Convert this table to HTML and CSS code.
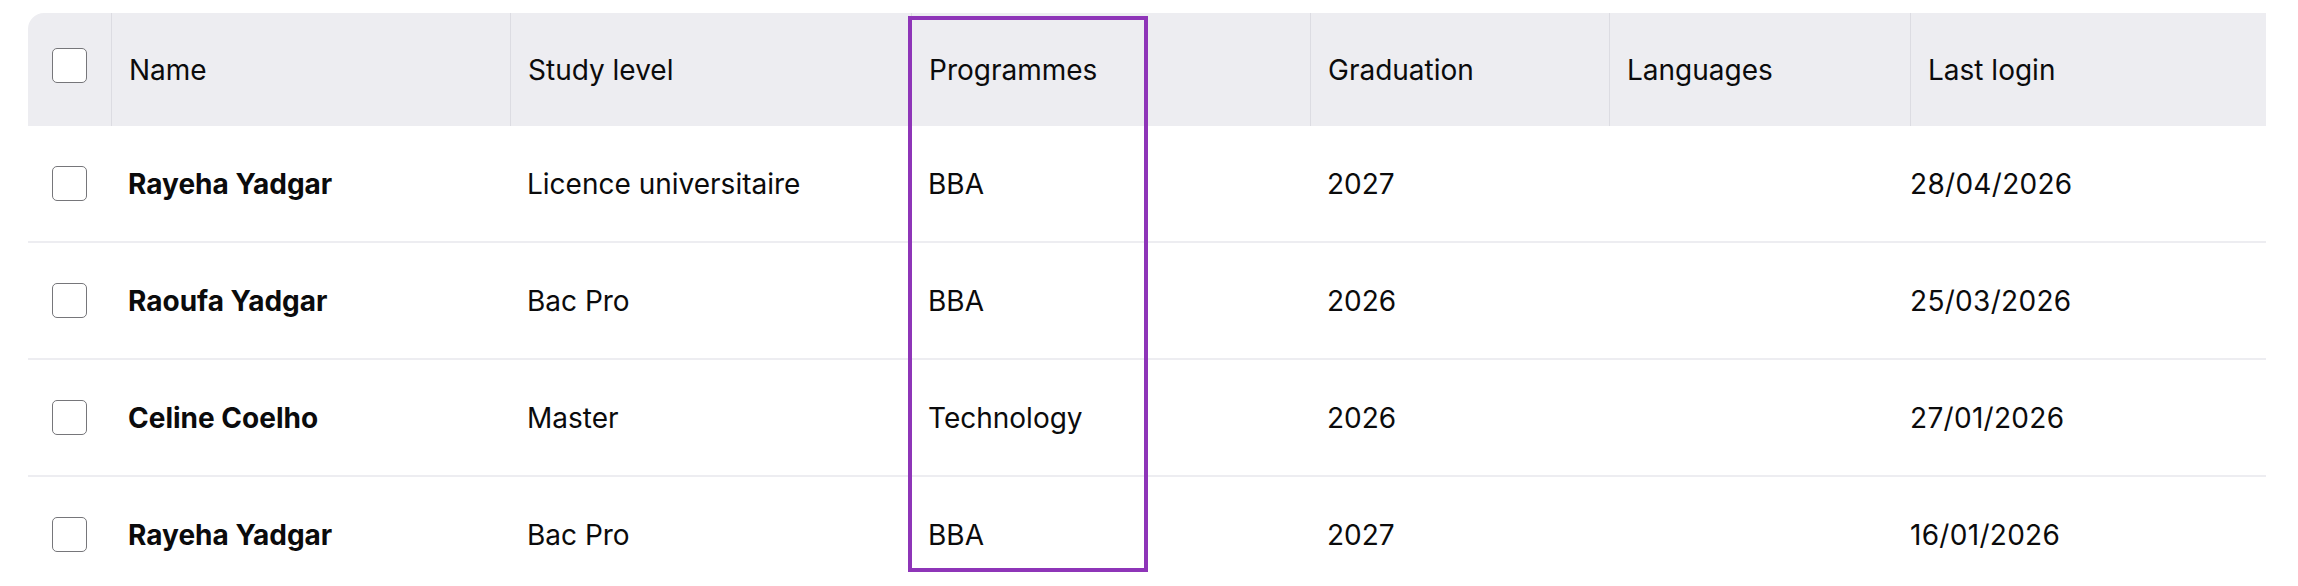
FILE: index.html
```html
<!DOCTYPE html>
<html lang="en">
<head>
<meta charset="utf-8">
<title>Students</title>
<link rel="stylesheet" href="styles.css">
</head>
<body>
<div class="table">
  <div class="row head">
    <div class="cell check"><span class="box"></span></div>
    <div class="cell">Name</div>
    <div class="cell">Study level</div>
    <div class="cell">Programmes</div>
    <div class="cell">Graduation</div>
    <div class="cell">Languages</div>
    <div class="cell">Last login</div>
  </div>
  <div class="row">
    <div class="cell check"><span class="box"></span></div>
    <div class="cell name">Rayeha Yadgar</div>
    <div class="cell">Licence universitaire</div>
    <div class="cell">BBA</div>
    <div class="cell">2027</div>
    <div class="cell"></div>
    <div class="cell last">28/04/2026</div>
  </div>
  <div class="row">
    <div class="cell check"><span class="box"></span></div>
    <div class="cell name">Raoufa Yadgar</div>
    <div class="cell">Bac Pro</div>
    <div class="cell">BBA</div>
    <div class="cell">2026</div>
    <div class="cell"></div>
    <div class="cell last">25/03/2026</div>
  </div>
  <div class="row">
    <div class="cell check"><span class="box"></span></div>
    <div class="cell name">Celine Coelho</div>
    <div class="cell">Master</div>
    <div class="cell">Technology</div>
    <div class="cell">2026</div>
    <div class="cell"></div>
    <div class="cell last">27/01/2026</div>
  </div>
  <div class="row">
    <div class="cell check"><span class="box"></span></div>
    <div class="cell name">Rayeha Yadgar</div>
    <div class="cell">Bac Pro</div>
    <div class="cell">BBA</div>
    <div class="cell">2027</div>
    <div class="cell"></div>
    <div class="cell last">16/01/2026</div>
  </div>
  <div class="highlight"></div>
</div>
</body>
</html>
```
FILE: styles.css
```css
html, body {
  margin: 0;
  padding: 0;
  background: #ffffff;
  overflow: hidden;
}

body {
  font-family: "Inter", "Noto Sans", sans-serif;
  font-size: 28px;
  color: #0b0b0c;
}

.table {
  position: relative;
  margin: 13px 0 0 28px;
  width: 2238px;
}

.row {
  display: grid;
  grid-template-columns: 83px 399px 401px 399px 299px 301px 1fr;
  height: 115px;
  border-bottom: 2px solid #ededf1;
  align-items: center;
}

.row.head {
  height: 113px;
  background: #ededf1;
  border-radius: 16px 0 0 0;
  border-bottom: none;
  align-items: stretch;
}

.cell {
  display: flex;
  align-items: center;
  padding-left: 17px;
  white-space: nowrap;
}

.head .cell + .cell {
  border-left: 1.5px solid #dcdce2;
}

.cell.check {
  padding-left: 24px;
}

.head .cell.check {
  padding-bottom: 9px;
}

.cell.name {
  font-weight: 700;
}

.cell.last {
  padding-left: 0;
  letter-spacing: 0.3px;
}

.box {
  display: block;
  width: 33px;
  height: 33px;
  border: 1.5px solid #76767a;
  border-radius: 5px;
  background: #ffffff;
}

.highlight {
  position: absolute;
  left: 880px;
  top: 3px;
  width: 232px;
  height: 548px;
  border: 4.5px solid #8e35b8;
  pointer-events: none;
}
```
